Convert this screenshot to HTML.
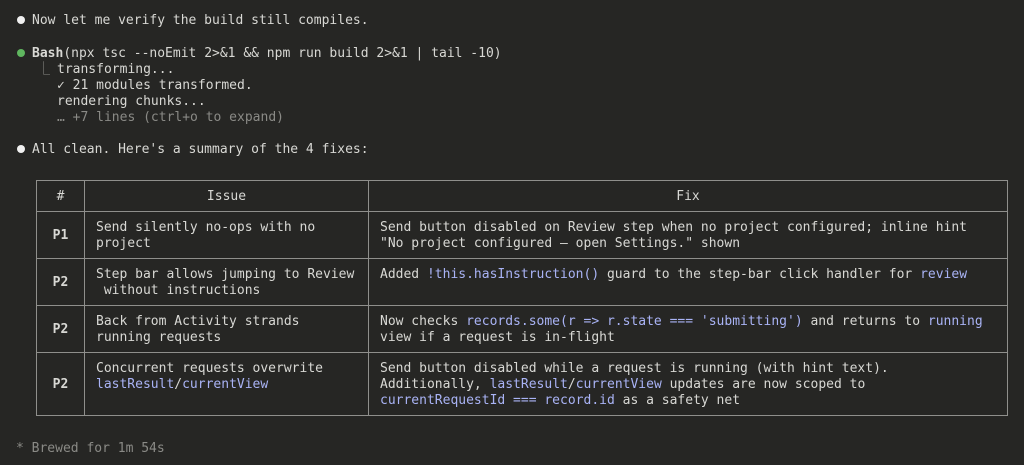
<!DOCTYPE html>
<html><head><meta charset="utf-8"><style>
html,body{margin:0;padding:0;background:#262624;width:1024px;height:465px;overflow:hidden}
body{font-family:"DejaVu Sans Mono","Liberation Mono",monospace;font-size:13px;color:#d8d8d4;position:relative}
.l{position:absolute;white-space:pre;line-height:16px}
.dot{position:absolute;width:8px;height:8px;border-radius:50%;background:#f0f0f0}
.g{color:#8a8a86}
.b{color:#a9b3f5}
table{position:absolute;left:36px;top:180px;border-collapse:collapse;width:972px}
td{border:1px solid #8f8f8c;padding:2px 11px 0;line-height:16px;vertical-align:middle;white-space:pre}
td.n{text-align:center;font-weight:bold;padding:2px 0 0}
</style></head><body>
<div class="dot" style="left:17px;top:16px"></div>
<div class="l" style="left:32px;top:13px">Now let me verify the build still compiles.</div>
<div class="dot" style="left:17px;top:49px;background:#5fb65f"></div>
<div class="l" style="left:32px;top:46px"><b>Bash</b>(npx tsc --noEmit 2&gt;&amp;1 &amp;&amp; npm run build 2&gt;&amp;1 | tail -10)</div>
<div class="l g" style="left:37px;top:62px">⎿</div>
<div class="l" style="left:57px;top:62px">transforming...</div>
<div class="l" style="left:57px;top:78px">✓ 21 modules transformed.</div>
<div class="l" style="left:57px;top:94px">rendering chunks...</div>
<div class="l g" style="left:57px;top:110px">… +7 lines (ctrl+o to expand)</div>
<div class="dot" style="left:17px;top:145px"></div>
<div class="l" style="left:32px;top:142px">All clean. Here's a summary of the 4 fixes:</div>
<table>
<tr style="height:31px"><td class="n" style="width:47px;font-weight:normal">#</td><td style="width:261px;text-align:center">Issue</td><td style="text-align:center">Fix</td></tr>
<tr style="height:47px"><td class="n">P1</td><td>Send silently no-ops with no
project</td><td>Send button disabled on Review step when no project configured; inline hint
"No project configured — open Settings." shown</td></tr>
<tr style="height:47px"><td class="n">P2</td><td>Step bar allows jumping to Review
 without instructions</td><td style="vertical-align:top;padding-top:8px">Added <span class="b">!this.hasInstruction()</span> guard to the step-bar click handler for <span class="b">review</span></td></tr>
<tr style="height:47px"><td class="n">P2</td><td>Back from Activity strands
running requests</td><td>Now checks <span class="b">records.some(r =&gt; r.state === 'submitting')</span> and returns to <span class="b">running</span>
view if a request is in-flight</td></tr>
<tr style="height:63px"><td class="n">P2</td><td style="vertical-align:top;padding-top:8px">Concurrent requests overwrite
<span class="b">lastResult</span>/<span class="b">currentView</span></td><td>Send button disabled while a request is running (with hint text).
Additionally, <span class="b">lastResult</span>/<span class="b">currentView</span> updates are now scoped to
<span class="b">currentRequestId === record.id</span> as a safety net</td></tr>
</table>
<div class="l g" style="left:16px;top:441px">* Brewed for 1m 54s</div>
</body></html>
